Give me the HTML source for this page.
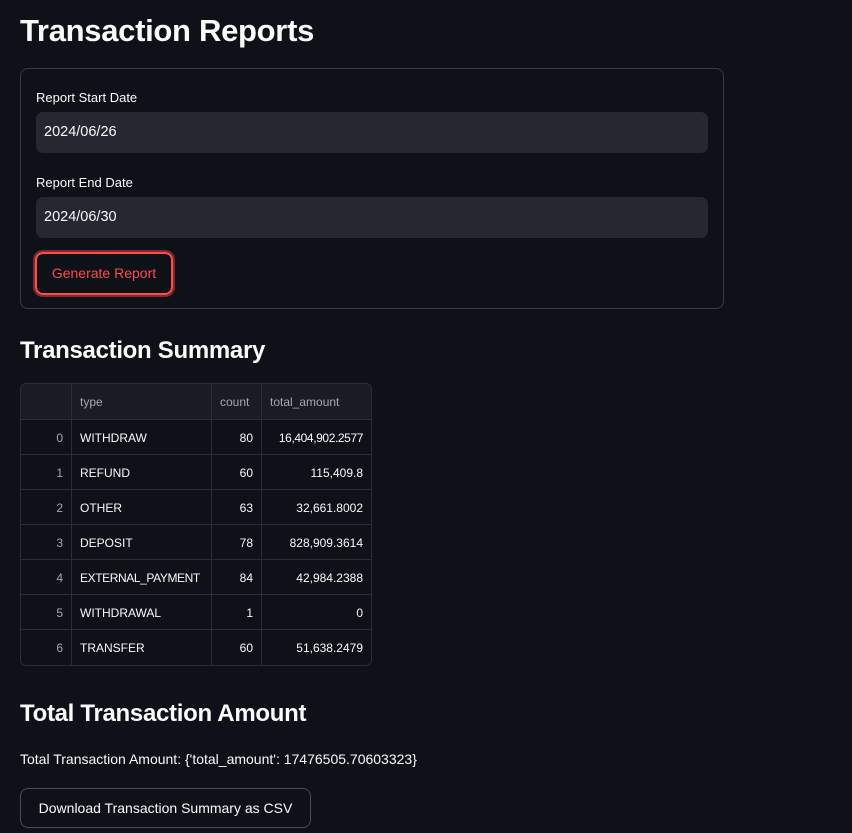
<!DOCTYPE html>
<html><head><style>
*{box-sizing:border-box;margin:0;padding:0}
body{width:852px;height:833px;background:#0e1117;color:#fafafa;font-family:"Liberation Sans",sans-serif;position:relative;overflow:hidden}
.a{position:absolute}
h1{position:absolute;left:20px;top:13px;font-size:31px;font-weight:bold;letter-spacing:-0.3px}
h2{position:absolute;left:20px;font-size:24px;font-weight:bold;letter-spacing:-0.3px}
.form{left:20px;top:68px;width:704px;height:241px;border:1px solid #3a3c44;border-radius:8px}
.lbl{font-size:13px;color:#fafafa}
.inp{left:36px;width:672px;height:41px;background:#262730;border-radius:7px;font-size:14.5px;padding:12px 8px}
.btn{left:35px;top:252px;width:138px;height:43px;border:2px solid #ff4b4b;box-shadow:0 0 0 2px rgba(255,75,75,.45);border-radius:8px;color:#ff4b4b;font-size:14px;text-align:center;line-height:39px}
table{position:absolute;left:20px;top:383px;width:352px;table-layout:fixed;border-collapse:separate;border-spacing:0;border:1px solid #2c2e36;border-radius:6px;font-size:12px;overflow:hidden}
td,th{height:35px;border-right:1px solid #2c2e36;border-bottom:1px solid #2c2e36;padding:1px 8px 0;white-space:nowrap;overflow:hidden}
th{font-weight:normal;color:#a3a8b4;background:#1a1c24;text-align:left;height:36px}
tr:last-child td{border-bottom:none}
td:last-child,th:last-child{border-right:none}
td.i{color:#a3a8b4;text-align:right}
td.n{text-align:right}
.e{letter-spacing:-0.4px}
.dl{left:20px;top:788px;width:291px;height:40px;border:1px solid #4a4c54;border-radius:8px;font-size:14px;text-align:center;line-height:38px}
</style></head><body>
<h1>Transaction Reports</h1>
<div class="a form"></div>
<div class="a lbl" style="left:36px;top:90px">Report Start Date</div>
<div class="a inp" style="top:112px">2024/06/26</div>
<div class="a lbl" style="left:36px;top:175px">Report End Date</div>
<div class="a inp" style="top:197px">2024/06/30</div>
<div class="a btn">Generate Report</div>
<h2 style="top:337px">Transaction Summary</h2>
<table>
<colgroup><col style="width:51px"><col style="width:140px"><col style="width:50px"><col style="width:109px"></colgroup>
<tr><th></th><th>type</th><th>count</th><th>total_amount</th></tr>
<tr><td class="i">0</td><td>WITHDRAW</td><td class="n">80</td><td class="n e">16,404,902.2577</td></tr>
<tr><td class="i">1</td><td>REFUND</td><td class="n">60</td><td class="n">115,409.8</td></tr>
<tr><td class="i">2</td><td>OTHER</td><td class="n">63</td><td class="n">32,661.8002</td></tr>
<tr><td class="i">3</td><td>DEPOSIT</td><td class="n">78</td><td class="n">828,909.3614</td></tr>
<tr><td class="i">4</td><td class="e">EXTERNAL_PAYMENT</td><td class="n">84</td><td class="n">42,984.2388</td></tr>
<tr><td class="i">5</td><td>WITHDRAWAL</td><td class="n">1</td><td class="n">0</td></tr>
<tr><td class="i">6</td><td>TRANSFER</td><td class="n">60</td><td class="n">51,638.2479</td></tr>
</table>
<h2 style="top:700px">Total Transaction Amount</h2>
<div class="a" style="left:20px;top:751px;font-size:14px">Total Transaction Amount: {'total_amount': 17476505.70603323}</div>
<div class="a dl">Download Transaction Summary as CSV</div>
</body></html>
